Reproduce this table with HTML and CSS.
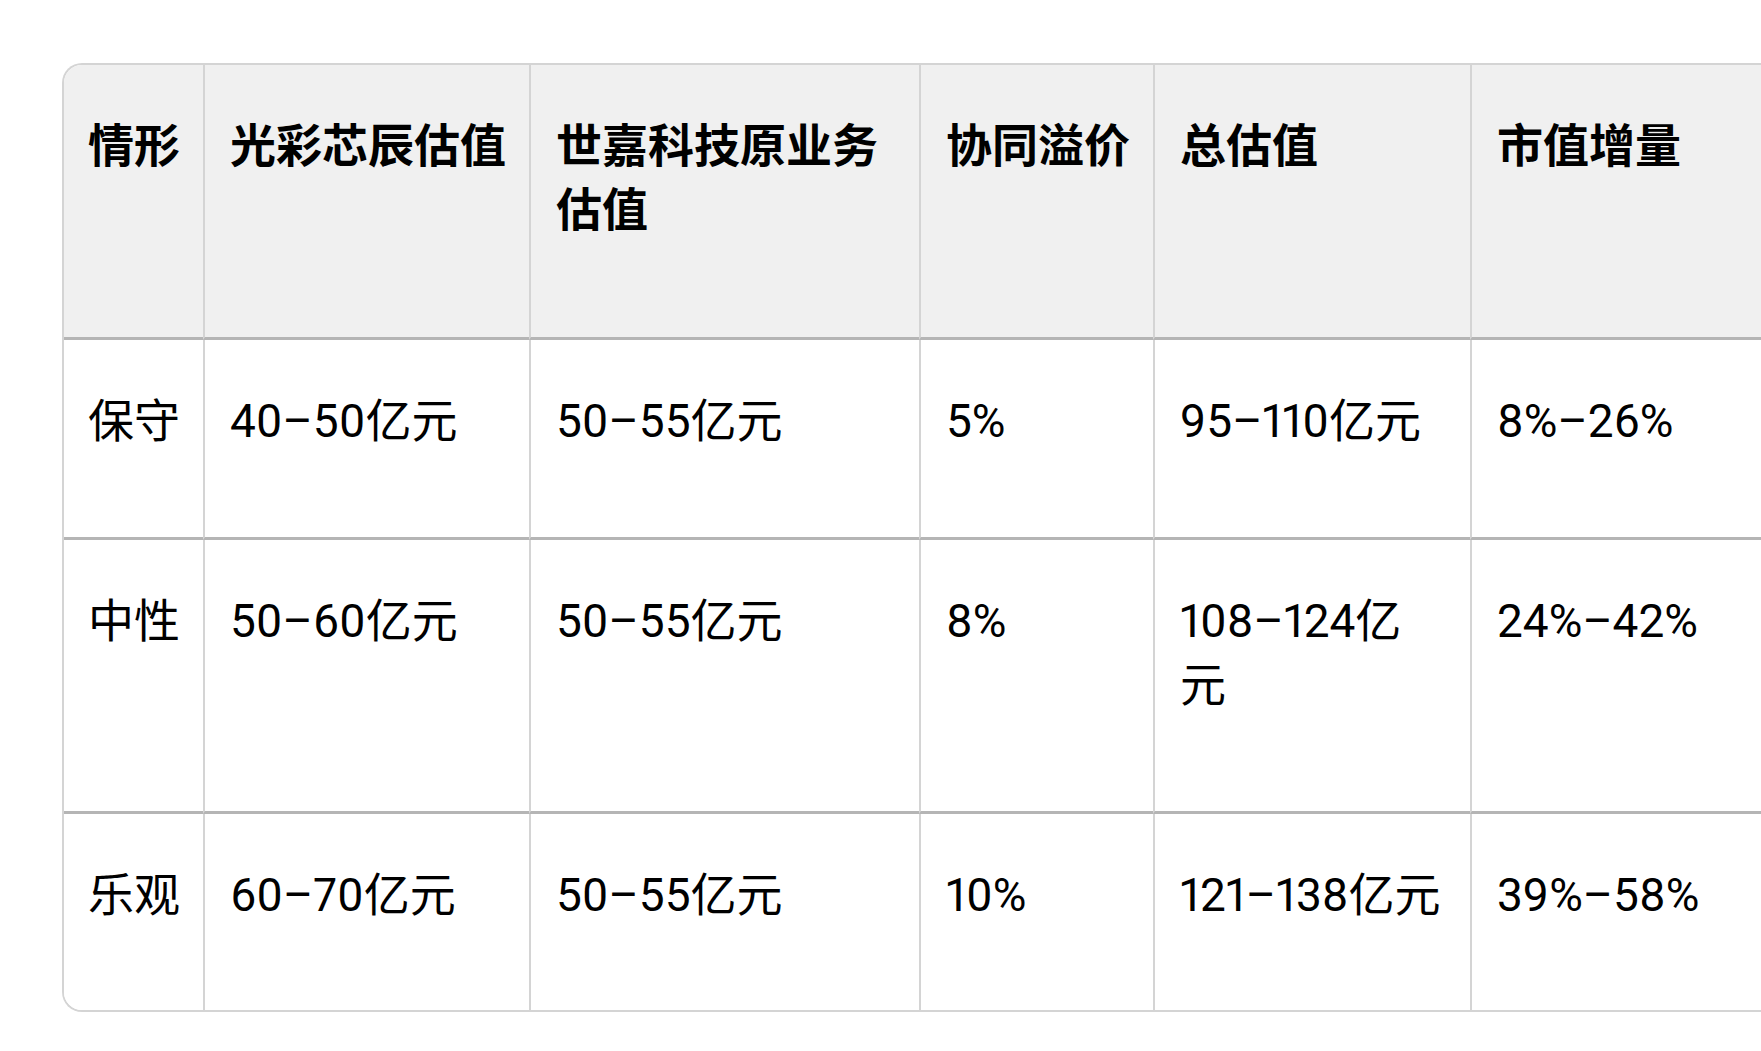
FILE: index.html
```html
<!DOCTYPE html>
<html lang="zh-CN">
<head>
<meta charset="utf-8">
<title>估值情形</title>
<link rel="stylesheet" href="styles.css">
</head>
<body>
<div class="table-wrap">
  <div class="grid">
    <div class="cell head first">情形</div>
    <div class="cell head">光彩芯辰估值</div>
    <div class="cell head">世嘉科技原业务估值</div>
    <div class="cell head">协同溢价</div>
    <div class="cell head total">总估值</div>
    <div class="cell head">市值增量</div>

    <div class="cell first">保守</div>
    <div class="cell">40–50亿元</div>
    <div class="cell">50–55亿元</div>
    <div class="cell">5%</div>
    <div class="cell total">95–110亿元</div>
    <div class="cell">8%–26%</div>

    <div class="cell first">中性</div>
    <div class="cell">50–60亿元</div>
    <div class="cell">50–55亿元</div>
    <div class="cell">8%</div>
    <div class="cell total">108–124亿元</div>
    <div class="cell">24%–42%</div>

    <div class="cell first last">乐观</div>
    <div class="cell last">60–70亿元</div>
    <div class="cell last">50–55亿元</div>
    <div class="cell last">10%</div>
    <div class="cell last total">121–138亿元</div>
    <div class="cell last">39%–58%</div>
  </div>
</div>
</body>
</html>
```
FILE: styles.css
```css
html, body {
  margin: 0;
  padding: 0;
  background: #ffffff;
  overflow: hidden;
}

body {
  font-family: Roboto, "Noto Sans CJK SC", sans-serif;
  font-size: 46px;
  line-height: 64px;
  color: #000000;
  font-variant-numeric: proportional-nums;
}

.table-wrap {
  margin: 63px 0 0 62px;
  width: 1728px;
  border: 2px solid #d4d4d4;
  border-right: none;
  border-radius: 20px 0 0 20px;
  overflow: hidden;
  box-sizing: border-box;
}

.grid {
  display: grid;
  grid-template-columns: 139px 326px 390px 234px 317px 320px;
  grid-template-rows: 275px 200px 274px 196px;
}

.cell {
  box-sizing: border-box;
  padding: 49px 12px 0 25px;
  border-left: 2px solid #d4d4d4;
  border-bottom: 3px solid #b5b5b5;
  background: #ffffff;
}

.cell.first {
  border-left: none;
  padding-left: 24px;
}

.cell.total {
  padding-right: 27px;
}

.cell.last {
  border-bottom: none;
}

.cell.head {
  background: #f0f0f0;
  font-weight: 700;
}
```
